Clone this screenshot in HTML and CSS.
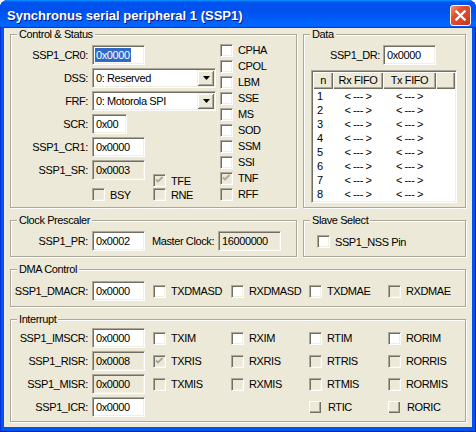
FILE: index.html
```html
<!DOCTYPE html>
<html lang="en">
<head>
    <meta charset="UTF-8">
    <title>Synchronus serial peripheral 1 (SSP1)</title>
    <link rel="stylesheet" href="styles.css">
</head>
<body>

<div class="window">
    <div class="titlebar">
        <span class="title">Synchronus serial peripheral 1 (SSP1)</span>
        <div class="close">
            <svg width="11" height="11" viewBox="0 0 11 11"><path d="M1.5 1.5 L9.5 9.5 M9.5 1.5 L1.5 9.5" stroke="#fff" stroke-width="2.3" stroke-linecap="square"/></svg>
        </div>
    </div>

    <div class="client">
        <!-- Control & Status -->
        <div class="group cs">
            <span class="group-title">Control &amp; Status</span>
            <div class="cs-left">
                <div class="row"><span class="lbl">SSP1_CR0:</span><div class="edit"><span class="sel">0x0000</span></div></div>
                <div class="row"><span class="lbl">DSS:</span>
                    <div class="combo"><span class="combo-text">0: Reserved</span><span class="drop"><svg width="7" height="4" viewBox="0 0 7 4"><path d="M0 0H7L3.5 4Z"/></svg></span></div>
                </div>
                <div class="row"><span class="lbl">FRF:</span>
                    <div class="combo"><span class="combo-text">0: Motorola SPI</span><span class="drop"><svg width="7" height="4" viewBox="0 0 7 4"><path d="M0 0H7L3.5 4Z"/></svg></span></div>
                </div>
                <div class="row"><span class="lbl">SCR:</span><div class="edit short">0x00</div></div>
                <div class="row"><span class="lbl">SSP1_CR1:</span><div class="edit">0x0000</div></div>
                <div class="row"><span class="lbl">SSP1_SR:</span><div class="edit dis">0x0003</div>
                    <label class="chk tfe"><span class="box dis"><svg width="11" height="11" viewBox="0 0 11 11"><polyline points="2,4.5 4,6.5 8.5,2" fill="none" stroke="#ACA899" stroke-width="1.8"/></svg></span>TFE</label>
                </div>
                <div class="flag-row">
                    <label class="chk"><span class="box dis"></span>BSY</label>
                    <label class="chk"><span class="box dis"></span>RNE</label>
                </div>
            </div>
            <div class="cs-flags">
                <label class="chk"><span class="box"></span>CPHA</label>
                <label class="chk"><span class="box"></span>CPOL</label>
                <label class="chk"><span class="box"></span>LBM</label>
                <label class="chk"><span class="box"></span>SSE</label>
                <label class="chk"><span class="box"></span>MS</label>
                <label class="chk"><span class="box"></span>SOD</label>
                <label class="chk"><span class="box"></span>SSM</label>
                <label class="chk"><span class="box"></span>SSI</label>
                <label class="chk"><span class="box dis"><svg width="11" height="11" viewBox="0 0 11 11"><polyline points="2,4.5 4,6.5 8.5,2" fill="none" stroke="#ACA899" stroke-width="1.8"/></svg></span>TNF</label>
                <label class="chk"><span class="box dis"></span>RFF</label>
            </div>
        </div>

        <!-- Data -->
        <div class="group data">
            <span class="group-title">Data</span>
            <div class="row"><span class="lbl">SSP1_DR:</span><div class="edit">0x0000</div></div>
            <div class="list">
                <div class="list-head">
                    <span class="hd n">n</span><span class="hd rx">Rx FIFO</span><span class="hd tx">Tx FIFO</span><span class="hd fill"></span>
                </div>
                <div class="list-row"><span class="c-n">1</span><span class="c-rx">&lt; --- &gt;</span><span class="c-tx">&lt; --- &gt;</span></div>
                <div class="list-row"><span class="c-n">2</span><span class="c-rx">&lt; --- &gt;</span><span class="c-tx">&lt; --- &gt;</span></div>
                <div class="list-row"><span class="c-n">3</span><span class="c-rx">&lt; --- &gt;</span><span class="c-tx">&lt; --- &gt;</span></div>
                <div class="list-row"><span class="c-n">4</span><span class="c-rx">&lt; --- &gt;</span><span class="c-tx">&lt; --- &gt;</span></div>
                <div class="list-row"><span class="c-n">5</span><span class="c-rx">&lt; --- &gt;</span><span class="c-tx">&lt; --- &gt;</span></div>
                <div class="list-row"><span class="c-n">6</span><span class="c-rx">&lt; --- &gt;</span><span class="c-tx">&lt; --- &gt;</span></div>
                <div class="list-row"><span class="c-n">7</span><span class="c-rx">&lt; --- &gt;</span><span class="c-tx">&lt; --- &gt;</span></div>
                <div class="list-row"><span class="c-n">8</span><span class="c-rx">&lt; --- &gt;</span><span class="c-tx">&lt; --- &gt;</span></div>
            </div>
        </div>

        <!-- Clock Prescaler -->
        <div class="group clock">
            <span class="group-title">Clock Prescaler</span>
            <div class="row">
                <span class="lbl">SSP1_PR:</span><div class="edit">0x0002</div>
                <span class="mlbl">Master Clock:</span><div class="edit dis mclk">16000000</div>
            </div>
        </div>

        <!-- Slave Select -->
        <div class="group slave">
            <span class="group-title">Slave Select</span>
            <label class="chk"><span class="box"></span>SSP1_NSS Pin</label>
        </div>

        <!-- DMA Control -->
        <div class="group dma wide">
            <span class="group-title">DMA Control</span>
            <div class="grid">
                <span class="lbl">SSP1_DMACR:</span><div class="edit">0x0000</div>
                <label class="chk"><span class="box"></span>TXDMASD</label>
                <label class="chk"><span class="box"></span>RXDMASD</label>
                <label class="chk"><span class="box"></span>TXDMAE</label>
                <label class="chk"><span class="box dis"></span>RXDMAE</label>
            </div>
        </div>

        <!-- Interrupt -->
        <div class="group irq wide">
            <span class="group-title">Interrupt</span>
            <div class="grid">
                <span class="lbl">SSP1_IMSCR:</span><div class="edit">0x0000</div>
                <label class="chk"><span class="box"></span>TXIM</label>
                <label class="chk"><span class="box"></span>RXIM</label>
                <label class="chk"><span class="box"></span>RTIM</label>
                <label class="chk"><span class="box"></span>RORIM</label>

                <span class="lbl">SSP1_RISR:</span><div class="edit dis">0x0008</div>
                <label class="chk"><span class="box dis"><svg width="11" height="11" viewBox="0 0 11 11"><polyline points="2,4.5 4,6.5 8.5,2" fill="none" stroke="#ACA899" stroke-width="1.8"/></svg></span>TXRIS</label>
                <label class="chk"><span class="box dis"></span>RXRIS</label>
                <label class="chk"><span class="box dis"></span>RTRIS</label>
                <label class="chk"><span class="box dis"></span>RORRIS</label>

                <span class="lbl">SSP1_MISR:</span><div class="edit dis">0x0000</div>
                <label class="chk"><span class="box dis"></span>TXMIS</label>
                <label class="chk"><span class="box dis"></span>RXMIS</label>
                <label class="chk"><span class="box dis"></span>RTMIS</label>
                <label class="chk"><span class="box dis"></span>RORMIS</label>

                <span class="lbl">SSP1_ICR:</span><div class="edit">0x0000</div>
                <span></span>
                <span></span>
                <label class="chk"><span class="box btn"></span>RTIC</label>
                <label class="chk"><span class="box btn"></span>RORIC</label>
            </div>
        </div>
    </div>
</div>

</body>
</html>
```

FILE: styles.css
```css
body {
    margin: 0;
    background-color: #fff;
    font-family: "Liberation Sans", Arial, sans-serif;
    font-size: 11px;
    color: #000;
}
.window {
    width: 476px;
    height: 432px;
    display: flex;
    flex-direction: column;
    background-color: #0055ea;
    border-radius: 8px 8px 0 0;
    box-shadow: inset 1px 0 #0831d9, inset -1px 0 #001ea0, inset 0 -1px #001ea0;
}
.titlebar {
    height: 28px;
    box-sizing: border-box;
    padding: 3px 5px 0 7px;
    display: flex;
    align-items: center;
    border-radius: 8px 8px 0 0;
    background: linear-gradient(180deg, #0997ff, #0053ee 8%, #0050ee 40%, #0066ff 88%, #0066ff 93%, #005bff 95%, #003dd7 96%, #003dd7);
}
.title {
    color: #fff;
    font-weight: bold;
    font-size: 13px;
    text-shadow: 1px 1px #0a1883;
    white-space: nowrap;
}
.close {
    margin-left: auto;
    width: 21px;
    height: 21px;
    box-sizing: border-box;
    border: 1px solid #fff;
    border-radius: 3px;
    background: linear-gradient(135deg, #eb9a7c, #e0502f 35%, #d8432a 70%, #c0341a);
    display: flex;
    align-items: center;
    justify-content: center;
}
.close svg {
    display: block;
}
.client {
    margin: 0 4px 5px;
    flex: 1;
    background-color: #ece9d8;
    padding: 6px 6px 0;
    display: grid;
    grid-template-columns: 287px 163px;
    grid-template-rows: 174px 37px 38px 103px;
    gap: 12px 6px;
    letter-spacing: -0.4px;
}
.group {
    position: relative;
    box-sizing: border-box;
    border: 1px solid #aca899;
    box-shadow: inset 1px 1px #fff, 1px 1px #fff;
}
.group-title {
    position: absolute;
    top: -7px;
    left: 6px;
    padding: 0 2px;
    line-height: 13px;
    background-color: #ece9d8;
    white-space: nowrap;
}
.wide {
    grid-column: 1 / 3;
}
.row {
    display: flex;
    align-items: center;
    height: 20px;
}
.lbl {
    width: 77px;
    margin-right: 4px;
    text-align: right;
    white-space: nowrap;
}

/* sunken edit box */
.edit {
    width: 53px;
    height: 20px;
    box-sizing: border-box;
    border: 1px solid;
    border-color: #aca899 #fff #fff #aca899;
    box-shadow: inset 1px 1px #716f64, inset -1px -1px #f1efe2;
    background-color: #fff;
    padding-left: 3px;
    line-height: 18px;
    white-space: nowrap;
    overflow: hidden;
    flex-shrink: 0;
}
.edit.short {
    width: 35px;
}
.edit.dis {
    background-color: #ece9d8;
}
.sel {
    display: inline-block;
    vertical-align: top;
    margin: 2px 0 0 -1px;
    padding: 0 1px;
    line-height: 14px;
    background-color: #316ac5;
    color: #fff;
}
.combo {
    width: 124px;
    height: 20px;
    box-sizing: border-box;
    border: 1px solid;
    border-color: #aca899 #fff #fff #aca899;
    box-shadow: inset 1px 1px #716f64, inset -1px -1px #f1efe2;
    padding: 1px;
    background-color: #fff;
    display: flex;
}
.combo-text {
    flex: 1;
    padding-left: 2px;
    line-height: 16px;
    white-space: nowrap;
}
.drop {
    width: 17px;
    height: 16px;
    box-sizing: border-box;
    padding-left: 1px;
    background-color: #ece9d8;
    box-shadow: inset 1px 1px #f1efe2, inset -1px -1px #716f64, inset 2px 2px #fff, inset -2px -2px #aca899;
    display: flex;
    align-items: center;
    justify-content: center;
}
.drop svg {
    display: block;
}

/* check boxes */
.chk {
    display: flex;
    align-items: center;
    gap: 5px;
    white-space: nowrap;
}
.box {
    width: 13px;
    height: 13px;
    box-sizing: border-box;
    flex-shrink: 0;
    border: 1px solid;
    border-color: #aca899 #fff #fff #aca899;
    box-shadow: inset 1px 1px #716f64, inset -1px -1px #f1efe2;
    background-color: #fff;
}
.box svg {
    display: block;
}
.box.dis {
    background-color: #ece9d8;
}
.box.btn {
    width: 12px;
    height: 12px;
    margin-right: 2px;
    border: none;
    background-color: #ece9d8;
    box-shadow: inset 1px 1px #fff, inset -1px -1px #716f64, inset -2px -2px #aca899;
}

/* Control & Status */
.cs {
    display: flex;
    padding-top: 9px;
}
.cs-left {
    width: 209px;
    padding-top: 1px;
    display: flex;
    flex-direction: column;
    gap: 3px;
}
.cs .tfe {
    align-self: flex-start;
    margin: 14px 0 0 8px;
}
.flag-row {
    display: flex;
    margin-top: 5px;
    padding-left: 81px;
}
.flag-row .chk {
    width: 61px;
}
.cs-flags {
    margin-top: -2px;
}
.cs-flags .chk {
    height: 16px;
}

/* Data */
.data {
    padding-top: 10px;
}
.data .lbl {
    width: 76px;
    margin-right: 3px;
}
.list {
    margin: 5px 0 0 7px;
    width: 146px;
    height: 133px;
    box-sizing: border-box;
    border: 1px solid;
    border-color: #aca899 #fff #fff #aca899;
    box-shadow: inset 1px 1px #716f64, inset -1px -1px #f1efe2;
    padding: 1px;
    background-color: #fff;
}
.list-head {
    display: flex;
    height: 17px;
}
.hd {
    box-sizing: border-box;
    background-color: #ece9d8;
    box-shadow: inset 1px 1px #fff, inset -1px -1px #716f64, inset -2px -2px #aca899;
    text-align: center;
    line-height: 16px;
}
.hd.n, .c-n {
    width: 20px;
}
.hd.rx, .c-rx {
    width: 50px;
}
.hd.tx, .c-tx {
    width: 53px;
}
.hd.fill {
    flex: 1;
}
.list-row {
    display: flex;
    height: 14px;
    line-height: 14px;
}
.c-n {
    box-sizing: border-box;
    padding-left: 4px;
}
.c-rx, .c-tx {
    text-align: center;
}

/* Clock Prescaler */
.clock {
    padding-top: 10px;
}
.mlbl {
    margin-left: 7px;
    white-space: nowrap;
}
.edit.mclk {
    width: 63px;
    margin-left: 4px;
}

/* Slave Select */
.slave {
    padding: 14px 0 0 13px;
}
.slave .chk {
    height: 13px;
}

/* DMA + Interrupt */
.dma {
    padding-top: 11px;
}
.irq {
    padding-top: 8px;
}
.grid {
    display: grid;
    grid-template-columns: 81px 61px 78px 78px 79px auto;
    grid-auto-rows: 20px;
    row-gap: 3px;
    align-items: center;
}
```
